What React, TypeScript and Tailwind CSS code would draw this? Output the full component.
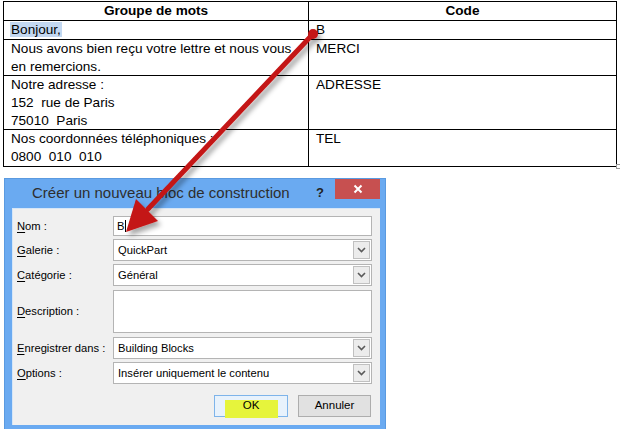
import React from "react";

const tableFont = { fontFamily: '"Liberation Sans", Arial, sans-serif' };
const uiFont = { fontFamily: '"Liberation Sans", Arial, sans-serif' };

function Chevron() {
  return (
    <svg width="9" height="6" viewBox="0 0 9 6">
      <polyline points="1,1 4.5,4.5 8,1" fill="none" stroke="#5a5a5a" strokeWidth="1.6" />
    </svg>
  );
}

function Select({ value }: { value: string }) {
  return (
    <div className="flex h-[22px] w-[259px] border border-[#b4b4b4] bg-white p-px">
      <div className="flex flex-1 items-center pl-[3px] text-[11.2px] text-black">{value}</div>
      <div className="flex w-[17px] items-center justify-center border border-[#c0c0c0] bg-[#ececec]">
        <Chevron />
      </div>
    </div>
  );
}

function Label({ first, rest }: { first: string; rest: string }) {
  return (
    <div className="w-[96px] shrink-0 whitespace-nowrap text-[11.2px] text-black">
      <span className="underline underline-offset-2">{first}</span>
      {rest}
    </div>
  );
}

export default function App() {
  return (
    <div className="relative h-[429px] w-[620px] overflow-hidden bg-white">
      {/* Table */}
      <div className="ml-[3px] mt-[1px] w-[614px] border border-black text-[13.6px] leading-[18px] text-black" style={tableFont}>
        <div className="flex border-b border-black font-bold">
          <div className="h-[18px] w-[305px] border-r border-black text-center">Groupe de mots</div>
          <div className="h-[18px] flex-1 text-center">Code</div>
        </div>
        <div className="flex border-b border-black">
          <div className="h-[18px] w-[305px] border-r border-black pl-[6px]">
            <span className="bg-[#c3d8f1] px-px">Bonjour,</span>
          </div>
          <div className="h-[18px] flex-1 pl-[7px]">B</div>
        </div>
        <div className="flex border-b border-black">
          <div className="h-[35px] w-[305px] whitespace-nowrap border-r border-black pl-[7px]">
            Nous avons bien reçu votre lettre et nous vous
            <br />
            en remercions.
          </div>
          <div className="h-[35px] flex-1 pl-[7px]">MERCI</div>
        </div>
        <div className="flex border-b border-black">
          <div className="h-[53px] w-[305px] border-r border-black pl-[7px]">
            Notre adresse :
            <br />
            152&nbsp; rue de Paris
            <br />
            75010&nbsp; Paris
          </div>
          <div className="h-[53px] flex-1 pl-[7px]">ADRESSE</div>
        </div>
        <div className="flex">
          <div className="h-[36px] w-[305px] border-r border-black pl-[7px]">
            Nos coordonnées téléphoniques :
            <br />
            0800&nbsp; 010&nbsp; 010
          </div>
          <div className="h-[36px] flex-1 pl-[7px]">TEL</div>
        </div>
      </div>
      <div className="absolute left-[616px] top-[164px] h-[5px] w-[5px] border border-[#9a9a9a] bg-white" />

      {/* Dialog */}
      <div className="ml-[4px] mt-[11px] w-[382px] border border-[#5a9ae0] bg-[#6aaaf1]" style={uiFont}>
        <div className="flex h-[29px] items-start">
          <div className="flex h-[29px] flex-1 items-center pl-[27px] text-[15px] text-[#2e2e2e]">
            Créer un nouveau bloc de construction
          </div>
          <div className="mr-[11px] mt-[4px] text-[13px] font-bold text-[#222]">?</div>
          <div className="mr-[5px] flex h-[20px] w-[45px] items-center justify-center bg-[#c75050]">
            <svg width="10" height="10" viewBox="0 0 10 10">
              <path d="M1.5 1.5 L8.5 8.5 M8.5 1.5 L1.5 8.5" stroke="white" strokeWidth="2" />
            </svg>
          </div>
        </div>
        <div className="mb-[4px] ml-[7px] mr-[5px] h-[217px] border-l border-t border-[#d6e6f7] bg-[#f0f0f0] pl-[4px] pt-[7px]">
          <div className="flex h-[20px] items-center">
            <Label first="N" rest="om :" />
            <div className="relative flex h-[20px] w-[259px] items-center border border-[#b4b4b4] bg-white pl-[3px] text-[11.2px] text-black">
              B<span className="ml-[1px] inline-block h-[12px] w-px bg-black" />
            </div>
          </div>
          <div className="mt-[3px] flex h-[22px] items-center">
            <Label first="G" rest="alerie :" />
            <Select value="QuickPart" />
          </div>
          <div className="mt-[3px] flex h-[22px] items-center">
            <Label first="C" rest="atégorie :" />
            <Select value="Général" />
          </div>
          <div className="mt-[4px] flex h-[43px] items-center">
            <Label first="D" rest="escription :" />
            <div className="h-[43px] w-[259px] border border-[#b4b4b4] bg-white" />
          </div>
          <div className="mt-[4px] flex h-[22px] items-center">
            <Label first="E" rest="nregistrer dans :" />
            <Select value="Building Blocks" />
          </div>
          <div className="mt-[3px] flex h-[22px] items-center">
            <Label first="O" rest="ptions :" />
            <Select value="Insérer uniquement le contenu" />
          </div>
          <div className="mt-[11px] flex justify-end gap-[10px] pr-[9px]">
            <div className="relative flex h-[22px] w-[74px] items-center justify-center border border-[#7eb4ea] bg-[#e8f2fc] text-[11.5px] text-black">
              <div className="absolute left-[10px] top-[4px] h-[18px] w-[53px] bg-[#e6f43c]" />
              <span className="relative">OK</span>
            </div>
            <div className="flex h-[22px] w-[73px] items-center justify-center border border-[#adadad] bg-[#e1e1e1] text-[11.5px] text-black">
              Annuler
            </div>
          </div>
        </div>
      </div>

      {/* Arrow overlay */}
      <svg className="pointer-events-none absolute left-0 top-0" width="620" height="429" viewBox="0 0 620 429">
        <defs>
          <filter id="sh" x="-20%" y="-20%" width="140%" height="140%">
            <feDropShadow dx="3" dy="4" stdDeviation="2.5" floodColor="#000" floodOpacity="0.35" />
          </filter>
        </defs>
        <g filter="url(#sh)">
          <line x1="313" y1="34" x2="148" y2="209" stroke="#c41414" strokeWidth="5" strokeLinecap="round" />
          <circle cx="313" cy="34" r="5" fill="#c41414" />
          <polygon points="126,232 158,221 136,199" fill="#c41414" />
        </g>
      </svg>
    </div>
  );
}
